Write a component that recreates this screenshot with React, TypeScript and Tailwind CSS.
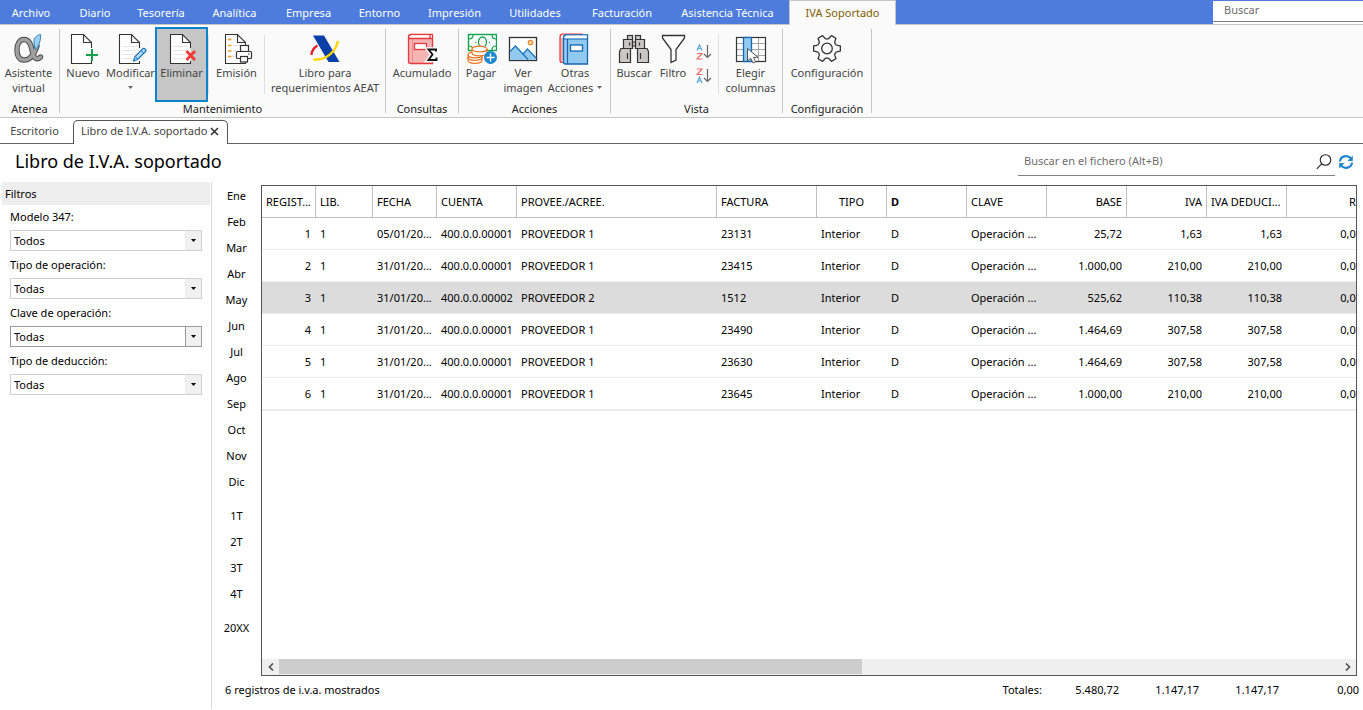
import React from 'react';

type IconProps = { children: React.ReactNode };

function Icon({ children }: IconProps) {
  return (
    <svg width="32" height="32" viewBox="0 0 32 32" fill="none" aria-hidden="true" className="shrink-0">
      {children}
    </svg>
  );
}

function Sheet({ lines = false }: { lines?: boolean }) {
  return (
    <>
      <path d="M24.5 15V9.5L16.5 1.5H4.5V30.5H24.5V28" fill="#fff" stroke="#333" strokeWidth="1.1" />
      <path d="M16.5 1.5V9.5H24.5" stroke="#333" strokeWidth="1.1" />
      {lines && <path d="M7 13.5H22M7 17.5H21M7 21.5H20M7 25.5H19" stroke="#e6e6e6" />}
    </>
  );
}

const AlphaIcon = () => {
  const d = 'M24 13C21.500 21 17 27 11 27C6 27 4 22.500 4 17C4 11 6.500 6.500 11 6.500C16.500 6.500 18 12 19.500 19C20.800 25.500 24 27.500 27.500 24';
  return (
    <Icon>
      <path d={d} stroke="#4a4a4a" strokeWidth="5.400" strokeLinecap="round" />
      <path d={d} stroke="#a0a0a0" strokeWidth="3.400" strokeLinecap="round" />
      <path d="M27.500 1.500C22.500 2.500 20.500 6 21 10L22.500 17C25.500 13 28 8 27.500 1.500Z" fill="#9fd0f2" stroke="#2f86c5" />
    </Icon>
  );
};

const NewIcon = () => (
  <Icon>
    <Sheet />
    <path d="M25 16V28M19 22H31" stroke="#fafafa" strokeWidth="4" />
    <path d="M25 16V28M19 22H31" stroke="#10a24a" strokeWidth="2" />
  </Icon>
);

const EditIcon = () => (
  <Icon>
    <Sheet lines />
    <path d="M18.500 28L20 23.500L28 15.500Q29.500 15 30.500 16.500Q31.500 17.500 30.500 18.500L22.500 26.500Z" fill="#b5dbf5" stroke="#1c75bc" strokeWidth="1.2" />
    <path d="M26 17.500L28.800 20.300M20.500 23.500L22.500 26" stroke="#1c75bc" />
  </Icon>
);

const DeleteIcon = () => (
  <Icon>
    <Sheet lines />
    <path d="M20.500 18L29 27M29 18L20.500 27" stroke="#f23b35" strokeWidth="2.800" />
  </Icon>
);

const PrintIcon = () => (
  <Icon>
    <Sheet />
    <path d="M12 7H14M12 12.500H20M12 18H15M12 23.500H14" stroke="#ddd" />
    <path d="M7 6.500H10.500M7 12.500H10.500M7 18H10.500M7 23.500H10.500" stroke="#f0a020" strokeWidth="1.400" />
    <rect x="19.500" y="12.500" width="8" height="6" fill="#fff" stroke="#333" strokeWidth="1.200" />
    <rect x="15.500" y="18.500" width="15" height="7" rx="1" fill="#fff" stroke="#333" strokeWidth="1.200" />
    <rect x="19.500" y="23.500" width="7" height="5.500" fill="#fff" stroke="#333" strokeWidth="1.200" />
    <path d="M27 21H28.500" stroke="#333" />
  </Icon>
);

const AgencyIcon = () => (
  <Icon>
    <path d="M4 2.500H15L30.500 29H19.500Z" fill="#0b3fa8" />
    <path d="M8.500 12.500C4.500 15 2.500 19 2.500 22" stroke="#e3202a" strokeWidth="2.400" />
    <path d="M29 8C27 18 18 27.500 4.500 26.500" stroke="#ffd400" strokeWidth="2.400" />
  </Icon>
);

const SumBookIcon = () => (
  <Icon>
    <path d="M2.500 4C2.500 2 3.500 1.500 5 1.500H26.500V30.500H4.500Q2.500 30.500 2.500 28.500Z" fill="#f4b5b5" stroke="#e8383d" strokeWidth="1.300" />
    <path d="M4 3.500Q4.500 2.300 6 2.300H25.800V5.500H4Z" fill="#fff" />
    <path d="M2.500 5.500H26.500M24 2V5.500" stroke="#e8383d" strokeWidth="1.300" />
    <path d="M6.500 6V30" stroke="#f08a8c" />
    <rect x="8.500" y="10.500" width="12" height="6" fill="#fff" stroke="#e8383d" strokeWidth="1.300" />
    <path d="M30 18.500V16.500H22.500L26.500 21.500L22.500 27H30.500V24.500" stroke="#fff" strokeWidth="4.500" />
    <path d="M30 18.500V16.500H22.500L26.500 21.500L22.500 27H30.500V24.500" stroke="#111" strokeWidth="1.900" />
  </Icon>
);

const PayIcon = () => (
  <Icon>
    <rect x="3.500" y="1.500" width="28" height="16" fill="#fff" stroke="#0ea44b" strokeWidth="1.400" />
    <path d="M4 6Q8 6 8 2M27 2Q27 6 31 6M4 13Q8 13 8 17M27 17Q27 13 31 13" stroke="#0ea44b" strokeWidth="1.200" />
    <ellipse cx="17.500" cy="9" rx="4" ry="5" stroke="#0ea44b" strokeWidth="1.300" />
    <path d="M10.500 9.500H11.500M24 9.500H25" stroke="#0ea44b" strokeWidth="1.400" />
    <g fill="#fff" stroke="#ee7623" strokeWidth="1.200">
      <path d="M3 24V27C3 31.500 17 31.500 17 27V24" />
      <path d="M3 22V24C3 28.500 17 28.500 17 24V22" />
      <ellipse cx="10" cy="22" rx="7" ry="2.800" />
      <path d="M7 16V19.500C7 24 22 24 22 19.500V16" />
      <ellipse cx="14.500" cy="16" rx="7.500" ry="2.900" />
    </g>
    <circle cx="25.500" cy="24.500" r="6.500" fill="#1e87cc" />
    <path d="M25.500 20.500V28.500M21.500 24.500H29.500" stroke="#fff" strokeWidth="1.400" />
  </Icon>
);

const ImageIcon = () => (
  <Icon>
    <rect x="2.500" y="4.500" width="27" height="23" fill="#fff" stroke="#333" strokeWidth="1.300" />
    <path d="M3 18.500L8.500 13L16 21L20.500 16L29 25V27H3Z" fill="#92c9f0" />
    <path d="M3 18.500L8.500 13L21 26.500M16 21L20.500 16L29 25" stroke="#1c75bc" strokeWidth="1.300" />
    <circle cx="23.500" cy="9.500" r="2.200" fill="#fbd9b0" stroke="#ee8a2f" strokeWidth="1.300" />
  </Icon>
);

const BooksIcon = () => (
  <Icon>
    <path d="M1 4Q1 1 3.500 1H23V29.500H3Q1 29.500 1 27.500Z" fill="#f4b5b5" stroke="#e8383d" strokeWidth="1.200" />
    <path d="M2 4Q3 2 5 2H23V5H2Z" fill="#fff" />
    <path d="M4.500 5Q4.500 1.800 7 1.800H28.500V31H6.500Q4.500 31 4.500 29Z" fill="#92c9f0" stroke="#1467b0" strokeWidth="1.300" />
    <path d="M5.500 4Q6 2.500 8 2.500H27.800V5.800H5.500Z" fill="#fff" />
    <path d="M4.500 6H28.500M8.500 6V31" stroke="#1467b0" strokeWidth="1.200" />
    <rect x="11.500" y="12" width="12" height="6" fill="#fff" stroke="#1467b0" strokeWidth="1.300" />
  </Icon>
);

const BinocularsIcon = () => (
  <Icon>
    <g fill="#c9c7c5" stroke="#333" strokeWidth="1.200">
      <rect x="9.500" y="2.500" width="5" height="4.500" />
      <rect x="17.500" y="2.500" width="5" height="4.500" />
      <path d="M5.500 6.500H14.500V15.500H5.500ZM17.500 6.500H26.500V15.500H17.500Z" />
      <path d="M14.500 9H17.500V13H14.500Z" />
      <path d="M3 15.500H12.500V29.500H1.500V18.500ZM19.500 15.500H29L30.500 18.500V29.500H19.500Z" />
    </g>
    <path d="M11.500 9.500V12.500M21.500 9.500V12.500M9.500 20V26M22.500 20V26" stroke="#333" strokeWidth="1.200" />
  </Icon>
);

const FunnelIcon = () => (
  <Icon>
    <path d="M5.500 2.500H27.500V5L19 16.500V27L14 29.500V16.500L5.500 5Z" fill="#fff" stroke="#333" strokeWidth="1.300" />
  </Icon>
);

const ColumnsIcon = () => (
  <Icon>
    <rect x="1.500" y="4.500" width="29" height="24" fill="#fff" />
    <path d="M2 10.500H30M2 16.500H30M2 22.500H30M23.500 5V28" stroke="#a6a6a6" />
    <rect x="1.500" y="4.500" width="29" height="24" stroke="#333" strokeWidth="1.200" />
    <rect x="8.500" y="4.500" width="8" height="24" fill="#92c9f0" stroke="#1467b0" strokeWidth="1.300" />
    <path d="M12.500 15.500V28L15.700 25.200L18 30L20.500 29L18.500 24.300H23Z" fill="#fff" stroke="#555" />
  </Icon>
);

const gearPath = Array.from({ length: 6 }, (_, i) => {
  const at = (r: number, deg: number) => {
    const a = ((i * 60 + deg) * Math.PI) / 180;
    return `${(16 + r * Math.cos(a)).toFixed(2)} ${(15.5 + r * Math.sin(a)).toFixed(2)}`;
  };
  return `${i === 0 ? 'M' : 'L'}${at(9.6, -23)}L${at(11, -17)}L${at(13.6, -11)}L${at(13.6, 11)}L${at(11, 17)}L${at(9.6, 23)}`;
}).join('');

const GearIcon = () => (
  <Icon>
    <path d={`${gearPath}Z`} stroke="#333" strokeWidth="1.300" strokeLinejoin="round" />
    <circle cx="16" cy="15.500" r="5.300" stroke="#333" strokeWidth="1.300" />
  </Icon>
);

function SortIcon({ descending = false }: { descending?: boolean }) {
  const a = 'M1 6.500L3.500 0.800L6 6.500M2 4.500H5';
  const z = 'M1 1H6L1 6.500H6.300';
  return (
    <svg width="16" height="16" viewBox="0 0 16 16" fill="none" aria-hidden="true">
      <g transform={descending ? 'translate(0 8.500)' : undefined}>
        <path d={a} stroke="#58a6da" strokeWidth="1.200" />
      </g>
      <g transform={descending ? undefined : 'translate(0 8.500)'}>
        <path d={z} stroke="#ee6a6a" strokeWidth="1.200" />
      </g>
      <path d="M11.500 1V13.500M8 10L11.500 13.500L15 10" stroke="#666" strokeWidth="1.200" />
    </svg>
  );
}

const menus = [
  { label: 'Archivo', width: 'w-[62px]' },
  { label: 'Diario', width: 'w-[66px]' },
  { label: 'Tesorería', width: 'w-[66px]' },
  { label: 'Analítica', width: 'w-[81px]' },
  { label: 'Empresa', width: 'w-[67px]' },
  { label: 'Entorno', width: 'w-[75px]' },
  { label: 'Impresión', width: 'w-[75px]' },
  { label: 'Utilidades', width: 'w-[86px]' },
  { label: 'Facturación', width: 'w-[88px]' },
  { label: 'Asistencia Técnica', width: 'w-[123px]' },
];

function MenuBar() {
  return (
    <header className="flex h-[25px] border-b border-[#c6c6c6] bg-[#4d7cdd] text-[11px] text-white">
      <nav className="flex" aria-label="Menú principal">
        {menus.map((m) => (
          <button key={m.label} type="button" className={`${m.width} h-6 whitespace-nowrap pt-[3px] text-center`}>
            {m.label}
          </button>
        ))}
        <button
          type="button"
          className="h-[25px] w-[107px] whitespace-nowrap border-x border-t border-[#c6c6c6] bg-[#fafafa] text-center text-[#7f6000]"
        >
          IVA Soportado
        </button>
      </nav>
      <div className="ml-auto w-[150px] bg-white">
        <input
          type="text"
          aria-label="Buscar"
          placeholder="Buscar"
          className="block h-[22px] w-full border-b border-t border-b-[#808080] border-t-[#4d7cdd] pb-[3px] pl-[11px] outline-none placeholder:text-[#6d6d6d]"
        />
      </div>
    </header>
  );
}

type ToolProps = {
  icon: React.ReactNode;
  lines: string[];
  width: string;
  active?: boolean;
  arrow?: 'below' | 'inline';
};

const Caret = () => (
  <svg width="5" height="3" viewBox="0 0 5 3" aria-hidden="true">
    <path d="M0 0H5L2.500 3Z" fill="#666" />
  </svg>
);

function Tool({ icon, lines, width, active, arrow }: ToolProps) {
  return (
    <button
      type="button"
      className={`${width} ${active ? 'bg-[#c6c6c6] outline-2 -outline-offset-2 outline-[#0a84cf]' : ''} flex h-[75px] flex-col items-center whitespace-nowrap pt-1.5 leading-[15px]`}
    >
      {icon}
      <span>{lines[0]}</span>
      {lines[1] && (
        <span className="flex items-center gap-1">
          {lines[1]}
          {arrow === 'inline' && <Caret />}
        </span>
      )}
      {arrow === 'below' && (
        <span className="flex h-[15px] items-center">
          <Caret />
        </span>
      )}
    </button>
  );
}

function Group({ title, width, children }: { title: string; width: string; children: React.ReactNode }) {
  return (
    <>
      <section className={`${width} shrink-0 pt-0.5`}>
        <div className="flex">{children}</div>
        <h2 className="text-center leading-[13px] text-[#222]">{title}</h2>
      </section>
      <div className="my-1 w-px shrink-0 bg-[#c6c6c6]" />
    </>
  );
}

const Divider = () => <div className="mb-2 mt-2 w-px shrink-0 bg-[#dedede]" />;

function Ribbon() {
  return (
    <div className="flex h-[93px] border-b border-[#c6c6c6] bg-[#fafafa] text-[11px] text-[#444]">
      <Group title="Atenea" width="w-[59px]">
        <Tool icon={<AlphaIcon />} lines={['Asistente', 'virtual']} width="w-[57px]" />
      </Group>
      <Group title="Mantenimiento" width="w-[325px]">
        <Tool icon={<NewIcon />} lines={['Nuevo']} width="w-[46px]" />
        <Tool icon={<EditIcon />} lines={['Modificar']} width="w-[49px]" arrow="below" />
        <Tool icon={<DeleteIcon />} lines={['Eliminar']} width="w-[53px]" active />
        <Divider />
        <Tool icon={<PrintIcon />} lines={['Emisión']} width="w-[55px]" />
        <Divider />
        <Tool icon={<AgencyIcon />} lines={['Libro para', 'requerimientos AEAT']} width="w-[120px]" />
      </Group>
      <Group title="Consultas" width="w-[72px]">
        <Tool icon={<SumBookIcon />} lines={['Acumulado']} width="w-[72px]" />
      </Group>
      <Group title="Acciones" width="w-[151px]">
        <Tool icon={<PayIcon />} lines={['Pagar']} width="w-[44px]" />
        <Tool icon={<ImageIcon />} lines={['Ver', 'imagen']} width="w-[40px]" />
        <Tool icon={<BooksIcon />} lines={['Otras', 'Acciones']} width="w-[64px]" arrow="inline" />
      </Group>
      <Group title="Vista" width="w-[171px]">
        <Tool icon={<BinocularsIcon />} lines={['Buscar']} width="w-[46px]" />
        <Tool icon={<FunnelIcon />} lines={['Filtro']} width="w-[32px]" />
        <div className="flex w-[29px] flex-col items-center gap-2 pt-[17px]">
          <button type="button" aria-label="Orden ascendente">
            <SortIcon />
          </button>
          <button type="button" aria-label="Orden descendente">
            <SortIcon descending />
          </button>
        </div>
        <Divider />
        <Tool icon={<ColumnsIcon />} lines={['Elegir', 'columnas']} width="w-[63px]" />
      </Group>
      <Group title="Configuración" width="w-[88px]">
        <Tool icon={<GearIcon />} lines={['Configuración']} width="w-[88px]" />
      </Group>
    </div>
  );
}

function DocumentTabs() {
  return (
    <div className="flex h-[26px] items-stretch text-[11px] text-[#444]">
      <button type="button" className="w-[73px] whitespace-nowrap border-b border-[#666] pr-1 pt-0.5">
        Escritorio
      </button>
      <div className="mt-0.5 flex w-[155px] items-center justify-between whitespace-nowrap rounded-t-[5px] border-x border-t border-[#555] pb-0.5 pl-[7px] pr-2">
        <span>Libro de I.V.A. soportado</span>
        <button type="button" aria-label="Cerrar">
          <svg width="9" height="9" viewBox="0 0 9 9" fill="none" className="block">
            <path d="M1 1L8 8M8 1L1 8" stroke="#333" strokeWidth="1.600" />
          </svg>
        </button>
      </div>
      <div className="flex-1 border-b border-[#666]" />
    </div>
  );
}

function TitleRow() {
  return (
    <div className="flex h-[38px] items-start justify-between pl-[15px] pr-[9px]">
      <h1 className="pt-[5px] text-lg leading-6 text-black">Libro de I.V.A. soportado</h1>
      <div className="flex items-center gap-[3px] pt-1">
        <label className="flex h-7 w-[317px] items-center border-b border-[#808080] pl-1.5 pr-[3px]">
          <input
            type="text"
            aria-label="Buscar en el fichero"
            placeholder="Buscar en el fichero (Alt+B)"
            className="min-w-0 flex-1 text-[11px] outline-none placeholder:text-[#6d6d6d]"
          />
          <svg width="16" height="16" viewBox="0 0 16 16" fill="none" aria-hidden="true">
            <circle cx="9.500" cy="6" r="5.300" stroke="#222" strokeWidth="1.100" />
            <path d="M5.700 9.800L0.800 14.800" stroke="#222" strokeWidth="1.100" />
          </svg>
        </label>
        <button type="button" aria-label="Actualizar">
          <svg width="16" height="16" viewBox="0 0 16 16" fill="none" className="block">
            <path d="M2 7.500C2.500 2 9.500 0.500 13 4.500M14 8.500C13.500 14 6.500 15.500 3 11.500" stroke="#1e87cc" strokeWidth="2.200" />
            <path d="M14.800 1.500V7H9.500ZM1.200 14.500V9H6.500Z" fill="#1e87cc" />
          </svg>
        </button>
      </div>
    </div>
  );
}

const filters = [
  { id: 'modelo', label: 'Modelo 347:', value: 'Todos', focus: false },
  { id: 'tipo', label: 'Tipo de operación:', value: 'Todas', focus: false },
  { id: 'clave', label: 'Clave de operación:', value: 'Todas', focus: true },
  { id: 'deduccion', label: 'Tipo de deducción:', value: 'Todas', focus: false },
];

function Filters() {
  return (
    <aside className="w-[212px] shrink-0 border-r border-[#d9d9d9] pl-0.5 text-[11px] text-black">
      <h2 className="mr-px h-[23px] bg-[#eeeeee] pl-[3px] leading-6">Filtros</h2>
      <div className="flex flex-col gap-[5px] pl-2 pr-[9px] pt-[3px]">
        {filters.map((f) => (
          <div key={f.id}>
            <label htmlFor={f.id} className="mb-1 block leading-[18px]">
              {f.label}
            </label>
            <div className="relative">
              <select
                id={f.id}
                className={`${f.focus ? 'border-[#999]' : 'border-[#d0d0d0]'} block h-[21px] w-full appearance-none border bg-white pl-[3px] pt-px outline-none`}
              >
                <option>{f.value}</option>
              </select>
              <span
                className={`${f.focus ? 'border-l border-[#999]' : ''} pointer-events-none absolute inset-y-px right-px flex w-4 items-center justify-center bg-[#f0f0f0]`}
              >
                <svg width="5" height="3" viewBox="0 0 5 3" aria-hidden="true">
                  <path d="M0 0H5L2.500 3Z" fill="#000" />
                </svg>
              </span>
            </div>
          </div>
        ))}
      </div>
    </aside>
  );
}

const months = ['Ene', 'Feb', 'Mar', 'Abr', 'May', 'Jun', 'Jul', 'Ago', 'Sep', 'Oct', 'Nov', 'Dic'];
const quarters = ['1T', '2T', '3T', '4T'];

function Periods() {
  return (
    <nav className="flex w-[49px] shrink-0 flex-col gap-2 pt-px text-[11px] text-black" aria-label="Periodos">
      {[months, quarters, ['20XX']].map((set) => (
        <div key={set[0]} className="flex flex-col">
          {set.map((p) => (
            <button key={p} type="button" className="h-[26px]">
              {p}
            </button>
          ))}
        </div>
      ))}
    </nav>
  );
}

const columns = [
  { title: 'REGIST...', width: 'w-[54px]', head: 'text-left', cell: 'text-right' },
  { title: 'LIB.', width: 'w-[57px]', head: 'text-left', cell: 'text-left' },
  { title: 'FECHA', width: 'w-[64px]', head: 'text-left', cell: 'text-left' },
  { title: 'CUENTA', width: 'w-[80px]', head: 'text-left', cell: 'text-left' },
  { title: 'PROVEE./ACREE.', width: 'w-[200px]', head: 'text-left', cell: 'text-left' },
  { title: 'FACTURA', width: 'w-[100px]', head: 'text-left', cell: 'text-left' },
  { title: 'TIPO', width: 'w-[70px]', head: 'text-center', cell: 'text-left' },
  { title: 'D', width: 'w-[80px]', head: 'text-left font-bold', cell: 'text-left' },
  { title: 'CLAVE', width: 'w-[80px]', head: 'text-left', cell: 'text-left' },
  { title: 'BASE', width: 'w-[80px]', head: 'text-right', cell: 'text-right' },
  { title: 'IVA', width: 'w-[80px]', head: 'text-right', cell: 'text-right' },
  { title: 'IVA DEDUCI...', width: 'w-[80px]', head: 'text-left', cell: 'text-right' },
  { title: 'RE', width: 'w-[80px]', head: 'text-right', cell: 'text-right' },
];

const rows = [
  ['1', '1', '05/01/20...', '400.0.0.00001', 'PROVEEDOR 1', '23131', 'Interior', 'D', 'Operación ...', '25,72', '1,63', '1,63', '0,00'],
  ['2', '1', '31/01/20...', '400.0.0.00001', 'PROVEEDOR 1', '23415', 'Interior', 'D', 'Operación ...', '1.000,00', '210,00', '210,00', '0,00'],
  ['3', '1', '31/01/20...', '400.0.0.00002', 'PROVEEDOR 2', '1512', 'Interior', 'D', 'Operación ...', '525,62', '110,38', '110,38', '0,00'],
  ['4', '1', '31/01/20...', '400.0.0.00001', 'PROVEEDOR 1', '23490', 'Interior', 'D', 'Operación ...', '1.464,69', '307,58', '307,58', '0,00'],
  ['5', '1', '31/01/20...', '400.0.0.00001', 'PROVEEDOR 1', '23630', 'Interior', 'D', 'Operación ...', '1.464,69', '307,58', '307,58', '0,00'],
  ['6', '1', '31/01/20...', '400.0.0.00001', 'PROVEEDOR 1', '23645', 'Interior', 'D', 'Operación ...', '1.000,00', '210,00', '210,00', '0,00'],
];

function Grid() {
  return (
    <div className="mt-[3px] flex min-h-0 min-w-0 flex-1 flex-col border border-[#555]">
      <div className="min-h-0 flex-1 overflow-hidden">
        <table className="w-[1105px] table-fixed border-separate border-spacing-0 text-[11px] text-black">
          <thead>
            <tr>
              {columns.map((c) => (
                <th
                  key={c.title}
                  className={`${c.width} ${c.head.includes('font-bold') ? '' : 'font-normal'} ${c.head} h-8 overflow-hidden whitespace-nowrap border-b border-r border-[#bfbfbf] px-1 pb-0 pt-px`}
                >
                  {c.title}
                </th>
              ))}
            </tr>
          </thead>
          <tbody>
            {rows.map((r, i) => (
              <tr key={r[0]} className={i === 2 ? 'bg-[#dcdcdc]' : ''}>
                {r.map((v, j) => (
                  <td
                    key={columns[j].title}
                    className={`${columns[j].cell} ${i === 5 ? 'h-[33px] border-b-2' : 'h-8 border-b'} overflow-hidden whitespace-nowrap border-b-[#ececec] pb-0 pl-1 pr-[5px] pt-px`}
                  >
                    {v}
                  </td>
                ))}
              </tr>
            ))}
          </tbody>
        </table>
      </div>
      <div className="flex h-4 shrink-0 bg-[#efefef]">
        <button type="button" aria-label="Desplazar a la izquierda" className="flex w-[17px] items-center justify-center">
          <svg width="6" height="8" viewBox="0 0 6 8" fill="none">
            <path d="M5 0.500L1.500 4L5 7.500" stroke="#555" strokeWidth="1.700" />
          </svg>
        </button>
        <div className="flex-1">
          <div className="h-[15px] w-[55%] bg-[#cdcdcd]" />
        </div>
        <button type="button" aria-label="Desplazar a la derecha" className="flex w-[17px] items-center justify-center">
          <svg width="6" height="8" viewBox="0 0 6 8" fill="none">
            <path d="M1 0.500L4.500 4L1 7.500" stroke="#555" strokeWidth="1.700" />
          </svg>
        </button>
      </div>
    </div>
  );
}

function Totals() {
  return (
    <footer className="flex h-[33px] items-center justify-between pb-1 pl-[13px] pr-1 text-[11px] text-black">
      <span>6 registros de i.v.a. mostrados</span>
      <div className="flex text-right">
        <span>Totales:</span>
        {['5.480,72', '1.147,17', '1.147,17', '0,00'].map((v, i) => (
          <span key={i} className={i === 0 ? 'w-[77px]' : 'w-20'}>
            {v}
          </span>
        ))}
      </div>
    </footer>
  );
}

export default function App() {
  return (
    <div className="flex h-screen flex-col overflow-hidden bg-white pb-px font-['Noto_Sans',sans-serif]">
      <MenuBar />
      <Ribbon />
      <DocumentTabs />
      <TitleRow />
      <main className="flex min-h-0 flex-1">
        <Filters />
        <div className="flex min-w-0 flex-1 flex-col">
          <div className="flex min-h-0 flex-1 pr-1.5">
            <Periods />
            <Grid />
          </div>
          <Totals />
        </div>
      </main>
    </div>
  );
}
